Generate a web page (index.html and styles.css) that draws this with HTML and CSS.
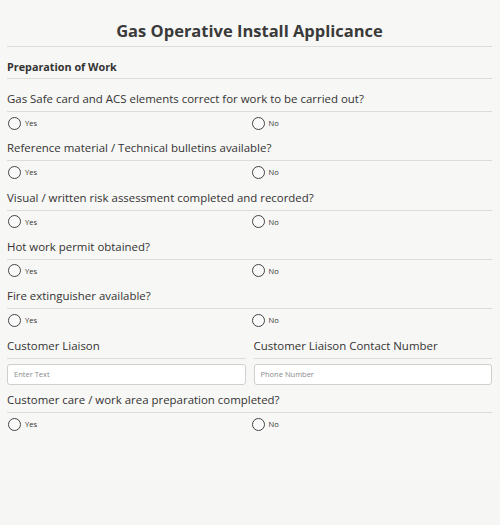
FILE: index.html
```html
<!DOCTYPE html>
<html lang="en">
<head>
<meta charset="utf-8">
<title>Gas Operative Install Applicance</title>
<link rel="stylesheet" href="styles.css">
</head>
<body>
<div class="card">
  <h1 class="title">Gas Operative Install Applicance</h1>
  <h2 class="section-title">Preparation of Work</h2>

  <div class="question">
    <div class="q-label">Gas Safe card and ACS elements correct for work to be carried out?</div>
    <div class="options">
      <label class="option"><span class="radio"></span><span class="opt-text">Yes</span></label>
      <label class="option"><span class="radio"></span><span class="opt-text">No</span></label>
    </div>
  </div>

  <div class="question">
    <div class="q-label">Reference material / Technical bulletins available?</div>
    <div class="options">
      <label class="option"><span class="radio"></span><span class="opt-text">Yes</span></label>
      <label class="option"><span class="radio"></span><span class="opt-text">No</span></label>
    </div>
  </div>

  <div class="question">
    <div class="q-label">Visual / written risk assessment completed and recorded?</div>
    <div class="options">
      <label class="option"><span class="radio"></span><span class="opt-text">Yes</span></label>
      <label class="option"><span class="radio"></span><span class="opt-text">No</span></label>
    </div>
  </div>

  <div class="question">
    <div class="q-label">Hot work permit obtained?</div>
    <div class="options">
      <label class="option"><span class="radio"></span><span class="opt-text">Yes</span></label>
      <label class="option"><span class="radio"></span><span class="opt-text">No</span></label>
    </div>
  </div>

  <div class="question">
    <div class="q-label">Fire extinguisher available?</div>
    <div class="options">
      <label class="option"><span class="radio"></span><span class="opt-text">Yes</span></label>
      <label class="option"><span class="radio"></span><span class="opt-text">No</span></label>
    </div>
  </div>

  <div class="field-row">
    <div class="field">
      <div class="q-label">Customer Liaison</div>
      <div class="input">Enter Text</div>
    </div>
    <div class="field">
      <div class="q-label">Customer Liaison Contact Number</div>
      <div class="input">Phone Number</div>
    </div>
  </div>

  <div class="question">
    <div class="q-label">Customer care / work area preparation completed?</div>
    <div class="options">
      <label class="option"><span class="radio"></span><span class="opt-text">Yes</span></label>
      <label class="option"><span class="radio"></span><span class="opt-text">No</span></label>
    </div>
  </div>
</div>
</body>
</html>
```

FILE: styles.css
```css
html, body {
  margin: 0;
  padding: 0;
  background: #f6f6f4;
}

body {
  font-family: "Open Sans", "Liberation Sans", sans-serif;
  color: #333333;
  height: 525px;
  overflow: hidden;
}

.card {
  margin: 0 3px 0 0;
  padding: 0 5px 40px 7px;
  background: #f7f7f5;
  border-radius: 6px;
}

.title {
  margin: 0;
  padding: 18px 0 2px;
  font-size: 16.5px;
  line-height: 26px;
  font-weight: 700;
  text-align: center;
  color: #3a3a3a;
  border-bottom: 1px solid #dcdcda;
}

.section-title {
  margin: 0 0 11px;
  padding: 12px 0 3px;
  font-size: 10.8px;
  line-height: 16px;
  font-weight: 700;
  color: #333;
  border-bottom: 1px solid #dcdcda;
}

.q-label {
  font-size: 11.45px;
  line-height: 18px;
  padding-bottom: 3px;
  border-bottom: 1px solid #dcdcda;
  white-space: nowrap;
}

.options {
  display: grid;
  grid-template-columns: 1fr 1fr;
  column-gap: 2px;
  padding: 4px 0 9.25px;
}

.option {
  display: flex;
  align-items: center;
  gap: 4px;
  height: 14px;
  padding-left: 1px;
}

.radio {
  width: 11px;
  height: 11px;
  border: 1px solid #444444;
  border-radius: 50%;
  background: #fafafa;
  flex: none;
}

.opt-text {
  font-size: 7.5px;
  color: #333;
}

.field-row {
  display: grid;
  grid-template-columns: 1fr 1fr;
  column-gap: 8px;
  margin-top: 1px;
  margin-bottom: 6px;
}

.input {
  margin-top: 5px;
  height: 19px;
  border: 1px solid #cfcfcf;
  border-radius: 3px;
  background: #ffffff;
  font-size: 7.5px;
  line-height: 19px;
  color: #8a8a8a;
  padding-left: 6px;
}
```
